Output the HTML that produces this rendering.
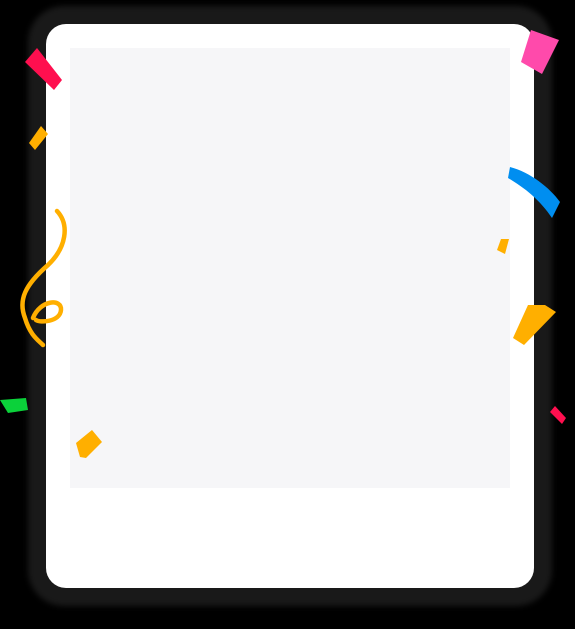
<!DOCTYPE html>
<html><head><style>
html,body{margin:0;padding:0;background:#000;width:575px;height:629px;overflow:hidden;position:relative}
.halo{position:absolute;left:28px;top:6px;width:524px;height:600px;border-radius:36px;background:#191919;filter:blur(3px)}
.card{position:absolute;left:46px;top:24px;width:488px;height:564px;border-radius:20px;background:#fff}
.inner{position:absolute;left:70px;top:48px;width:440px;height:440px;background:#f6f6f8}
svg{position:absolute;left:0;top:0}
</style></head><body>
<div class="halo"></div>
<div class="card"></div>
<div class="inner"></div>
<svg width="575" height="629" viewBox="0 0 575 629">
<polygon points="25,62 37,48 62,80 54,90" fill="#ff0f4f"/>
<polygon points="29,143 41,126 48,134 35,150" fill="#ffaf00"/>
<path d="M57,211 C70,225 66,248 48,265 C25,285 18,300 25,318 C30,335 38,340 43,345" stroke="#ffaf00" stroke-width="4.5" fill="none" stroke-linecap="round"/>
<path d="M33,318 C40,300 62,298 61,310 C60,322 40,323 36,320" stroke="#ffaf00" stroke-width="4.5" fill="none" stroke-linecap="round"/>
<polygon points="0,400 26,398 28,410 8,413" fill="#0bd13a"/>
<polygon points="76,443 92,430 102,442 86,458 80,457" fill="#ffaf00"/>
<polygon points="521,62 531,30 559,40 542,74" fill="#ff4aab"/>
<path d="M510,167 C530,172 550,188 560,202 L552,218 C540,200 525,188 508,178 Z" fill="#008ef0"/>
<polygon points="497,250 501,239 509,239 505,254" fill="#ffaf00"/>
<polygon points="513,338 528,305 545,305 556,312 524,345" fill="#ffaf00"/>
<polygon points="550,412 555,406 566,418 562,424" fill="#ff0f4f"/>
</svg>
</body></html>
